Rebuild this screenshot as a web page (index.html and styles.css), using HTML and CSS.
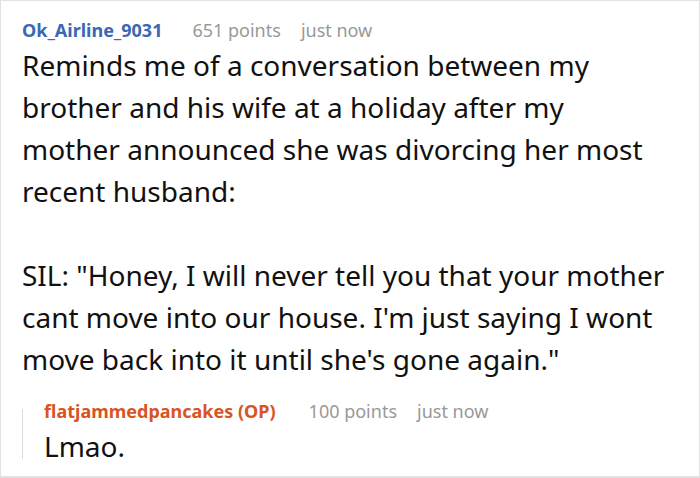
FILE: index.html
```html
<!DOCTYPE html>
<html>
<head>
<meta charset="utf-8">
<link rel="stylesheet" href="styles.css">
</head>
<body>
<div class="card">
  <div class="meta">
    <span class="user">Ok_Airline_9031</span>
    <span class="info">651 points</span>
    <span class="info">just now</span>
  </div>
  <div class="body">
    <p class="lead">Reminds me of a conversation between my brother and his wife at a holiday after my mother announced she was divorcing her most recent husband:</p>
    <p class="gap">SIL: "Honey, I will never tell you that your mother cant move into our house. I'm just saying I wont move back into it until she's gone again."</p>
  </div>
  <div class="reply">
    <div class="rail"></div>
    <div class="reply-content">
      <div class="meta">
        <span class="user op">flatjammedpancakes (OP)</span>
        <span class="info">100 points</span>
        <span class="info">just now</span>
      </div>
      <div class="body"><p>Lmao.</p></div>
    </div>
  </div>
</div>
</body>
</html>
```

FILE: styles.css
```css
html, body {
  margin: 0;
  padding: 0;
  background: #fff;
}
.card {
  box-sizing: border-box;
  width: 700px;
  height: 478px;
  border: 1px solid #e2e2e2;
  border-bottom-width: 2px;
  padding: 15px 30px 0 21px;
  font-family: "Noto Sans", "Open Sans", sans-serif;
  overflow: hidden;
}
.meta {
  display: flex;
  gap: 20px;
  font-size: 18px;
  line-height: 28px;
  height: 28px;
  white-space: nowrap;
}
.user {
  font-weight: 700;
  color: #3a68b5;
  margin-right: 10px;
}
.user.op {
  color: #d9541f;
  margin-right: 13px;
}
.info {
  color: #999;
}
.body p {
  margin: 0;
  font-size: 28px;
  line-height: 42px;
  color: #111;
}
.body p.lead {
  margin-right: 9px;
}
.body p.gap {
  margin-top: 42px;
}
.reply {
  display: flex;
  margin-top: 17px;
}
.rail {
  width: 1px;
  background: #dcdcdc;
  margin: 12px 0 8px 0;
}
.reply-content {
  padding-left: 21px;
}
```
